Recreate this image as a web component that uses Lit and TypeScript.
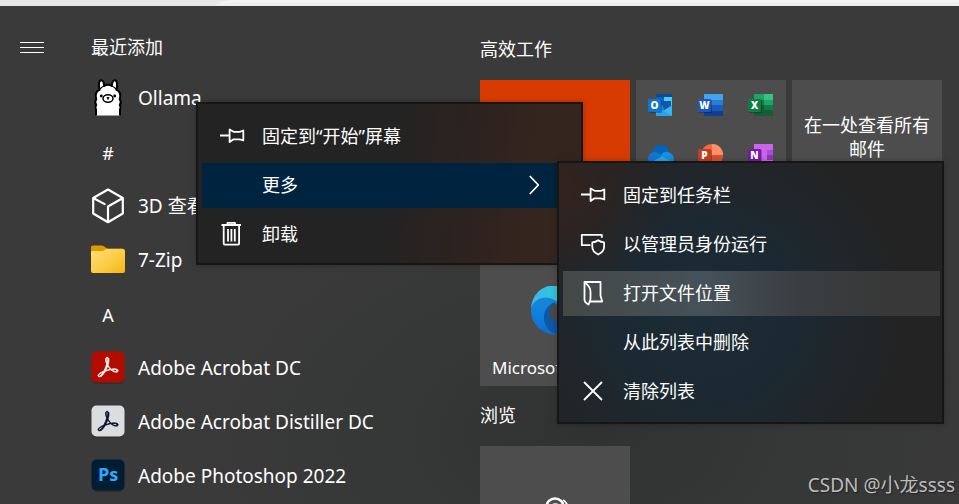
import { LitElement, html, svg, css, nothing } from "lit";
import { customElement } from "lit/decorators.js";
import { classMap } from "lit/directives/class-map.js";

const acrobatMark = svg`<path d="M23.63 15.3c-.71-.745-2.166-1.17-4.224-1.17-1.1 0-2.377.106-3.761.354a19.443 19.443 0 0 1-2.307-2.661c-.532-.71-.994-1.49-1.42-2.236.817-2.484 1.207-4.507 1.207-5.962 0-1.632-.603-3.336-2.342-3.336-.532 0-1.065.32-1.349.781-.78 1.384-.425 4.4.923 7.381a60.277 60.277 0 0 1-1.703 4.507c-.568 1.349-1.207 2.733-1.917 4.01C2.834 18.53.314 20.34.03 21.758c-.106.533.071 1.03.462 1.42.142.107.639.533 1.49.533 2.59 0 5.323-4.188 6.707-6.707 1.065-.355 2.13-.71 3.194-.994a34.963 34.963 0 0 1 3.407-.745c2.732 2.448 5.145 2.839 6.352 2.839 1.49 0 2.023-.604 2.2-1.1.32-.64.106-1.349-.213-1.704zm-1.42 1.03c-.107.532-.64.887-1.384.887-.213 0-.39-.036-.604-.071-1.348-.32-2.626-.994-3.903-2.059a17.717 17.717 0 0 1 2.98-.248c.746 0 1.385.035 1.81.142.497.106 1.278.426 1.1 1.348zm-7.524-1.668a38.01 38.01 0 0 0-2.945.674 39.68 39.68 0 0 0-2.52.745 40.05 40.05 0 0 0 1.207-2.555c.426-.994.78-2.023 1.136-2.981.354.603.745 1.207 1.135 1.739a50.127 50.127 0 0 0 1.987 2.378zM10.038 1.46a.768.768 0 0 1 .674-.425c.745 0 .887.851.887 1.526 0 1.135-.355 2.874-.958 4.861-1.03-2.768-1.1-5.074-.603-5.962zM6.134 17.997c-1.81 2.981-3.549 4.826-4.613 4.826a.872.872 0 0 1-.532-.177c-.213-.213-.32-.461-.249-.745.213-1.065 2.271-2.555 5.394-3.904Z"/>`;

const adobeTile = (bg: string, content: unknown) => html`<svg width="34" height="36" viewBox="0 0 34 36" aria-hidden="true">
  <rect x="1" y="3" width="32" height="31" rx="5" fill="#262626" opacity=".6"/>
  <rect x="0.5" y="1.5" width="33" height="31" rx="5" fill=${bg}/>
  ${content}
</svg>`;

const appIcons: Record<string, unknown> = {
  ollama: html`<svg width="34" height="38" viewBox="0 0 34 38" aria-hidden="true">
    <path d="M5 36.500V30.500c-.9-1.500-.9-3 .2-4.600-1.500-2-1.300-4 .1-5.600-1.700-4.600.3-8.600 3.200-9.400C7.300 6.500 7.800 1.300 10.300 1.300c2.100 0 2.700 3.200 2.900 5.700 2.500-1.600 5.100-1.600 7.600 0 .2-2.500.8-5.700 2.900-5.700 2.500 0 3 5.200 1.800 9.600 2.900.8 4.900 4.800 3.200 9.400 1.400 1.600 1.600 3.600.1 5.600 1.100 1.600 1.100 3.100.2 4.600v6z" fill="#fff"/>
    <path d="M5 36.500V30.500c-.9-1.500-.9-3 .2-4.600-1.500-2-1.300-4 .1-5.600-1.700-4.600.3-8.600 3.200-9.400C7.300 6.500 7.800 1.300 10.300 1.300c2.100 0 2.700 3.200 2.900 5.700 2.500-1.600 5.100-1.600 7.600 0 .2-2.500.8-5.700 2.900-5.700 2.500 0 3 5.200 1.800 9.600 2.900.8 4.900 4.800 3.200 9.400 1.400 1.600 1.600 3.600.1 5.600 1.100 1.600 1.100 3.100.2 4.600v6" fill="none" stroke="#000" stroke-width="2" stroke-linejoin="round"/>
    <path d="M8.500 10.500q2-2.500 4.700-3.500M25.500 10.500q-2-2.500-4.700-3.500" fill="none" stroke="#000" stroke-width="1.300"/>
    <ellipse cx="17" cy="19.500" rx="5" ry="3.800" fill="#fff" stroke="#000" stroke-width="1.500"/>
    <path d="M15.800 18.600h2.400L17 19.700zM17 19.500v1.500" fill="#000" stroke="#000" stroke-width=".9"/>
    <circle cx="10.300" cy="17" r="1.400"/><circle cx="23.700" cy="17" r="1.400"/>
  </svg>`,
  viewer: html`<svg width="34" height="36" viewBox="0 0 34 36" aria-hidden="true">
    <path d="M17 1.500 31.800 10v15.500L17 34.200 2.200 25.500V10zM2.700 10.300l11 5.800M17 34V18.500l14.500-8.300" fill="none" stroke="#fff" stroke-width="2.200" stroke-linejoin="round" stroke-linecap="round"/>
  </svg>`,
  folder: html`<svg width="34" height="30" viewBox="0 0 34 30" aria-hidden="true">
    <defs><linearGradient id="f" x1="0" y1="0" x2="1" y2="1"><stop offset="0" stop-color="#ffdf76"/><stop offset=".55" stop-color="#fecb44"/><stop offset="1" stop-color="#f6b511"/></linearGradient></defs>
    <path d="M0 8V2Q0 .5 1.500.5H11c2.500 0 3.500 3 6 3h15v6z" fill="#dd9b00"/>
    <path d="M0 7Q0 6 1.500 6H11c2 0 3-2 5.500-2H32q2 0 2 2V26q0 2-2 2H2q-2 0-2-2z" fill="url(#f)"/>
  </svg>`,
  acrobat: adobeTile("#b30b00", svg`<g transform="translate(7 7) scale(.84)" fill="#fff" stroke="#fff" stroke-width=".9">${acrobatMark}</g>`),
  distiller: adobeTile("#dcddde", svg`<g transform="translate(7 7) scale(.84)" fill="#000b24" stroke="#000b24" stroke-width=".9">${acrobatMark}</g>`),
  photoshop: adobeTile("#001d34", svg`<text x="17" y="23" text-anchor="middle" class="ps">Ps</text>`),
};

const line = (content: unknown) => html`<svg class="glyph" width="24" height="24" viewBox="0 0 24 24" aria-hidden="true" fill="none" stroke="#fff" stroke-width="1.800" stroke-linejoin="round">${content}</svg>`;

const menuIcons: Record<string, unknown> = {
  pin: line(svg`<path d="M0 11.500h9.500M9.600 5.500v12.500l4-2.700h6.200l3.500 1.200V6.500l-3.500 1.300h-6.200z"/>`),
  trash: line(svg`<path d="M1.500 3h19.500M7.500 3V.8h7.500V3M3.700 3v18.500q0 1.200 1.200 1.200h13q1.200 0 1.200-1.200V3M8 7v12.500M11.400 7v12.500M14.800 7v12.500"/>`),
  shield: line(svg`<path d="M9.500 13.200H.8V2.800h20v3M17.200 8.200c1.800 1.400 3.600 2 5.900 2.100v4.500c0 3.600-2.300 6-5.900 7.700-3.600-1.700-5.900-4.100-5.900-7.700v-4.500c2.300-.1 4.100-.7 5.900-2.100z"/>`),
  folder: line(svg`<path d="M3.500 1h16v13.500l1.700 6H9M3.500 1v17.500c0 2 1 3.500 4 5 1-2.500 2-4 2-6.500v-6.500C9.500 5.500 6 3.500 3.500 1z"/>`),
  clear: line(svg`<path d="M3 3l18 18M21 3 3 21"/>`),
  none: html`<span class="glyph"></span>`,
};

const badge = (color: string, letter: string) => svg`
  <rect x="1" y="7" width="13" height="13" rx="1" fill="#000" opacity=".25"/>
  <rect x="0" y="6" width="13" height="13" rx="1" fill=${color}/>
  <text x="6.500" y="16" text-anchor="middle" class="letter">${letter}</text>`;

const officeIcons = [
  { name: "Outlook", art: svg`<path d="M8 1h16v20H8z" fill="#1490df"/><path d="M8 1h16v3H8z" fill="#0a4c93"/><path d="M8 4h8v8H8z" fill="#0b62b8"/><path d="M16 4h8v8h-8z" fill="#4cc9f5"/><path d="M13 8h10v6l-7 3z" fill="#0f5aa8"/><path d="M24 12v11H8z" fill="#3bb5f0"/><path d="M8 13l16 10H8z" fill="#2aa3e8"/>${badge("#0f73cf", "O")}` },
  { name: "Word", art: svg`<path d="M6 1h19v6H6z" fill="#41a5ee"/><path d="M6 7h19v5H6z" fill="#2b7cd3"/><path d="M6 12h19v6H6z" fill="#185abd"/><path d="M6 18h19v5H6z" fill="#103f91"/>${badge("#1b58bd", "W")}` },
  { name: "Excel", art: svg`<path d="M6 1h10v6H6z" fill="#21a366"/><path d="M16 1h9v6h-9z" fill="#33c481"/><path d="M6 7h10v5H6z" fill="#107c41"/><path d="M16 7h9v5h-9z" fill="#21a366"/><path d="M6 12h10v11H6z" fill="#185c37"/><path d="M16 12h9v5h-9z" fill="#107c41"/><path d="M16 17h9v6h-9z" fill="#185c37"/>${badge("#107c41", "X")}` },
  { name: "OneDrive", art: svg`<path d="M5 10a8 8 0 0 1 16-1l-8 8z" fill="#0364b8"/><path d="M0 17a7 7 0 0 1 8-8l9 5-13 7z" fill="#0f78d4"/><path d="M13 12a7 7 0 0 1 7-3q6 2 6 8-1 3-4 4z" fill="#1490df"/><path d="M2 20l12-7 11 7q-2 2-5 2H7q-3 0-5-2z" fill="#28a8ea"/>` },
  { name: "PowerPoint", art: svg`<circle cx="14" cy="12" r="11" fill="#ed6c47"/><path d="M14 1a11 11 0 0 1 11 11H14z" fill="#ff8f6b"/><path d="M3 12h22a11 11 0 0 1-22 0z" fill="#d35230"/>${badge("#c43e1c", "P")}` },
  { name: "OneNote", art: svg`<path d="M6 1h19v22H6z" fill="#ca64ea"/><path d="M19 7h6v5h-6z" fill="#ae4bd5"/><path d="M19 12h6v5h-6z" fill="#9332bf"/>${badge("#7719aa", "N")}` },
];

@customElement("context-item")
class ContextItem extends LitElement {
  static properties = {
    icon: {},
    label: {},
    tone: {},
    expands: { type: Boolean },
  };
  declare icon: string;
  declare label: string;
  declare tone: string;
  declare expands: boolean;

  static styles = css`
    :host { display: block; }
    .item {
      box-sizing: border-box; width: 100%; height: 45px; padding: 0 18px 2px; border: 0;
      display: flex; align-items: center; gap: 18px;
      background: transparent; color: #fff; text-align: left; font: inherit;
    }
    .selected { background: #00243f; }
    .hover { background: linear-gradient(90deg, #444947, #455159 38%, #3a3e42 62%, #383838 85%); }
    .glyph { flex: none; display: block; width: 24px; height: 24px; overflow: visible; }
    .text { flex: 1; white-space: nowrap; line-height: 24px; }
    .chevron { flex: none; margin-right: 22px; }
  `;

  render() {
    return html`<button role="menuitem" class=${classMap({ item: true, selected: this.tone === "selected", hover: this.tone === "hover" })}
        aria-haspopup=${this.expands ? "true" : "false"}>
      ${menuIcons[this.icon ?? "none"]}
      <span class="text">${this.label}</span>
      ${this.expands
        ? html`<svg class="chevron" width="10" height="20" viewBox="0 0 10 20" aria-hidden="true"><path d="M.8 1 9.300 10 .8 19" fill="none" stroke="#fff" stroke-width="1.700"/></svg>`
        : nothing}
    </button>`;
  }
}

@customElement("app-menu")
class AppMenu extends LitElement {
  static styles = css`
    :host { display: block; }
    .menu {
      box-sizing: border-box; width: 387px; padding: 10px 2px 6px 4px;
      border: 2px solid #171616; display: flex; flex-direction: column; gap: 4px;
      box-shadow: 0 0 6px rgba(0, 0, 0, 0.25);
    }
    .main { position: relative; background: linear-gradient(97deg, #232323 50%, #2c221f 68%, #35251f 86%); }
    .sub {
      position: absolute; left: 359px; top: 57px; padding-bottom: 8px;
      background:
        radial-gradient(circle at 0% 10%, #33231e 0, rgba(51, 35, 30, 0) 110px),
        radial-gradient(ellipse 200px 190px at 38% 58%, #1b2b35 0, #1c2932 45%, rgba(34, 34, 34, 0) 100%),
        #232323;
    }
  `;

  render() {
    return html`<div class="menu main" role="menu">
      <context-item icon="pin" label="固定到“开始”屏幕"></context-item>
      <context-item label="更多" tone="selected" expands></context-item>
      <context-item icon="trash" label="卸载"></context-item>
      <div class="menu sub" role="menu" aria-label="更多">
        <context-item icon="pin" label="固定到任务栏"></context-item>
        <context-item icon="shield" label="以管理员身份运行"></context-item>
        <context-item icon="folder" label="打开文件位置" tone="hover"></context-item>
        <context-item label="从此列表中删除"></context-item>
        <context-item icon="clear" label="清除列表"></context-item>
      </div>
    </div>`;
  }
}

const groups = [
  { letter: "", apps: [{ name: "Ollama", icon: "ollama" }] },
  { letter: "#", apps: [{ name: "3D 查看器", icon: "viewer" }, { name: "7-Zip", icon: "folder" }] },
  {
    letter: "A",
    apps: [
      { name: "Adobe Acrobat DC", icon: "acrobat" },
      { name: "Adobe Acrobat Distiller DC", icon: "distiller" },
      { name: "Adobe Photoshop 2022", icon: "photoshop" },
    ],
  },
];

@customElement("app-root")
class AppRoot extends LitElement {
  static styles = css`
    :host {
      display: flex; flex-direction: column; position: relative; height: 100vh; overflow: hidden;
      font: 18px/24px "Noto Sans", "Noto Sans CJK SC", sans-serif; color: #fff;
    }
    button { font: inherit; color: inherit; border: 0; padding: 0; background: none; text-align: left; }
    svg { display: block; flex: none; }
    h2 { margin: 0; font: inherit; }
    ul { margin: 0; padding: 0; list-style: none; }
    .strip { flex: none; height: 6px; background: #e6e6e6; }
    .tab { height: 6px; margin-left: 216px; background: linear-gradient(#f4f4f4, #ebebeb); border-top-left-radius: 24px 8px; }
    .start {
      flex: 1; min-height: 0; display: grid; grid-template-columns: 64px minmax(0, 416fr) minmax(0, 479fr);
      background: radial-gradient(ellipse 420px 260px at 62% 86%, #303131 0, #363737 50%, rgba(58, 58, 58, 0) 100%), #3a3a3a;
    }
    .rail { padding: 36px 20px; }
    .expand { display: block; }
    .apps { position: relative; padding-left: 27px; }
    .recent { padding: 29px 0 12px; }
    .letter-row { box-sizing: border-box; height: 54px; width: 34px; padding-top: 4px; display: flex; align-items: center; justify-content: center; line-height: 24px; padding-bottom: 2px; }
    .app { height: 54px; width: 100%; display: flex; align-items: center; gap: 13px; white-space: nowrap; font-size: 19px; }
    .ps { font: 700 18px "Open Sans", sans-serif; fill: #31a8ff; }
    .letter { font: 800 10px "Open Sans", sans-serif; fill: #fff; }
    .popup { position: absolute; left: 132px; top: 96px; z-index: 1; }
    .tiles { padding: 13px 17px 0 0; }
    .title { padding: 18px 0 19px; }
    .lower { padding: 17px 0 19px; }
    .grid { display: grid; grid-template-columns: repeat(3, minmax(0, 1fr)); gap: 6px; }
    .tile { aspect-ratio: 1; overflow: hidden; background: #4d4d4d; min-width: 0; box-sizing: border-box; }
    .office { grid-column: 1; background: #d83b01; }
    .folder { display: grid; grid-template: repeat(3, 1fr) / repeat(3, 1fr); place-items: center; }
    .mail { display: flex; align-items: flex-start; padding: 33px 12px; text-align: center; }
    .edge { grid-column: 1; display: flex; flex-direction: column; justify-content: space-between; padding: 50px 12px 6px; white-space: nowrap; font-size: 17px; }
    .centre { align-self: center; }
    .browse { grid-column: 1; display: flex; justify-content: center; align-items: center; }
    .watermark { position: absolute; right: 4px; bottom: 7px; color: #bdbdbd; font-size: 19px; text-shadow: 1px 1px 1px #222; }
  `;

  render() {
    return html`
      <div class="strip"><div class="tab"></div></div>
      <main class="start">
        <nav class="rail">
          <button class="expand" aria-label="展开">
            <svg width="24" height="11" viewBox="0 0 24 11"><path d="M0 .5h24M0 5.500h24M0 10.500h24" stroke="#fff"/></svg>
          </button>
        </nav>
        <section class="apps">
          <h2 class="recent">最近添加</h2>
          ${groups.map((g) => html`
            ${g.letter ? html`<button class="letter-row">${g.letter}</button>` : nothing}
            <ul>${g.apps.map((a) => html`<li><button class="app">${appIcons[a.icon]}<span>${a.name}</span></button></li>`)}</ul>`)}
          <app-menu class="popup"></app-menu>
        </section>
        <section class="tiles">
          <h2 class="title">高效工作</h2>
          <div class="grid">
            <button class="tile office" aria-label="Office"></button>
            <div class="tile folder">
              ${officeIcons.map((o) => html`<svg width="26" height="24" viewBox="0 0 26 24" role="img" aria-label=${o.name}>${o.art}</svg>`)}
            </div>
            <button class="tile mail">在一处查看所有邮件</button>
            <button class="tile edge">
              <svg class="centre" width="48" height="50" viewBox="0 0 48 50" aria-hidden="true">
                <defs>
                  <linearGradient id="e1" x1="0" y1="0" x2="1" y2="0"><stop offset="0" stop-color="#3fb4f5"/><stop offset=".5" stop-color="#2fc6d8"/><stop offset="1" stop-color="#5fe06a"/></linearGradient>
                  <linearGradient id="e2" x1="0" y1="0" x2="0" y2="1"><stop offset=".2" stop-color="#1a86d0"/><stop offset=".6" stop-color="#0f7fe0"/><stop offset="1" stop-color="#0f6cc8"/></linearGradient>
                </defs>
                <circle cx="24" cy="24.500" r="24" fill="url(#e2)"/>
                <path d="M0 22A24 24 0 0 1 48 24c0 7-6 10-12 10-5 0-4-3-4-6 0-8-6-14-13-16C11 10 3 14 0 22z" fill="url(#e1)"/>
                <path d="M24 16C16 19 12.500 26 13 33c.6 8 6 14 14 15.300 9-1 15-6 18-11-6 3-12 2-17-2z" fill="#0f56a4"/>
                <path d="M23 18c-4 2-5.500 6-4.500 10 1 4 4 7 8 8 3-2 6-5 6-9 0-5-4-9-9.500-9z" fill="#4a4a4a"/>
              </svg>
              <span>Microsoft Edge</span>
            </button>
          </div>
          <h2 class="title lower">浏览</h2>
          <div class="grid">
            <button class="tile browse" aria-label="浏览">
              <svg width="48" height="50" viewBox="0 0 48 50" fill="none" stroke="#fff" stroke-width="2.500" aria-hidden="true">
                <circle cx="24" cy="11" r="8.500"/><path d="M19 12c2-5 8-5 10-1M32 4c3 2 5 5 5 8" stroke-width="1.800"/>
              </svg>
            </button>
          </div>
        </section>
      </main>
      <div class="watermark">CSDN @小龙ssss</div>
    `;
  }
}
